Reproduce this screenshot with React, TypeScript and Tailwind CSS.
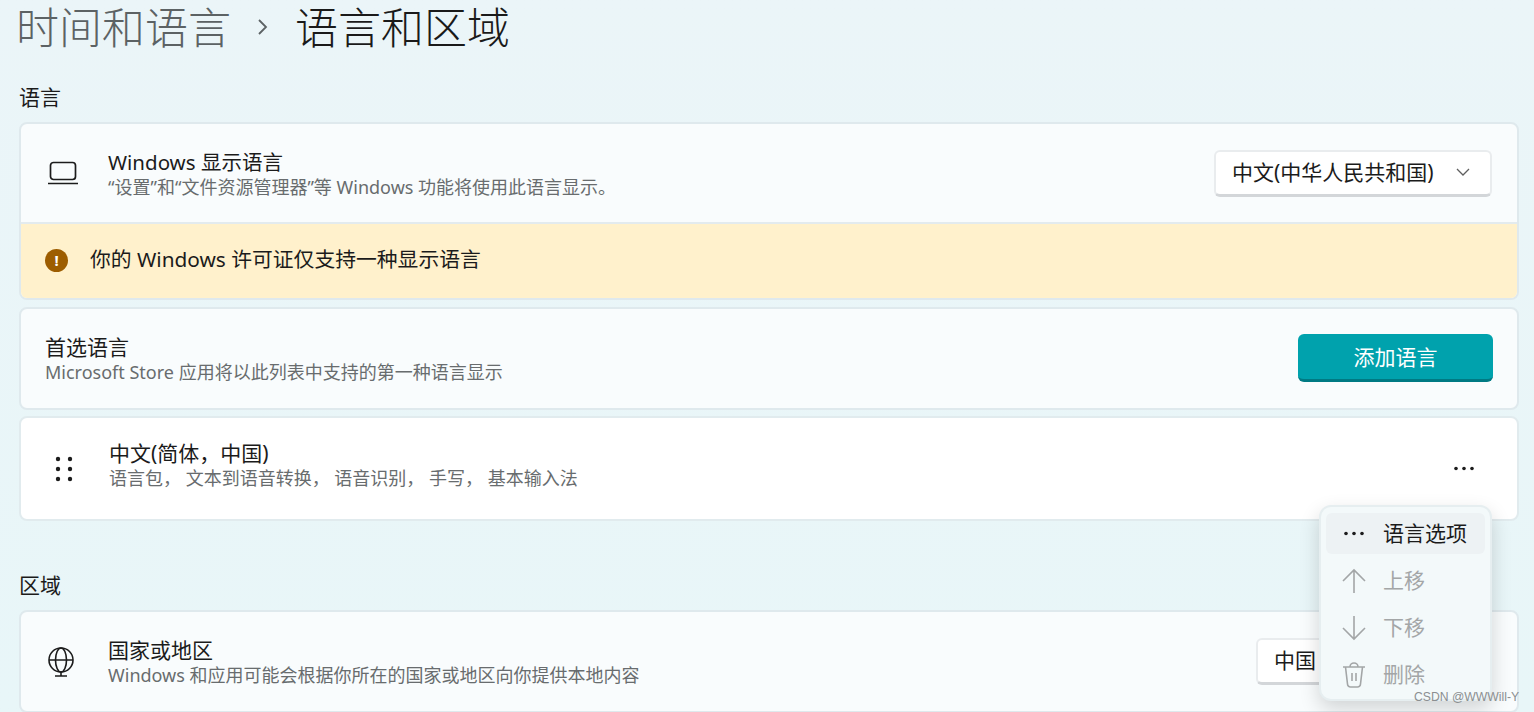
const font = { fontFamily: '"Noto Sans", "Noto Sans CJK SC", sans-serif' };

function Laptop() {
  return (
    <svg width="30" height="24" viewBox="0 0 30 24" fill="none" stroke="#1c1c1c" strokeWidth="1.7">
      <rect x="2.5" y="1.5" width="25" height="17" rx="3" />
      <path d="M0 22.5h30" />
    </svg>
  );
}

function Globe() {
  return (
    <svg width="28" height="30" viewBox="0 0 28 30" fill="none" stroke="#1c1c1c" strokeWidth="1.6">
      <circle cx="14" cy="13" r="12" />
      <ellipse cx="14" cy="13" rx="5.5" ry="12" />
      <path d="M2 13h24M14 25v4M8 29h12" />
    </svg>
  );
}

function Dots({ className }: { className?: string }) {
  return (
    <svg className={className} width="20" height="5" viewBox="0 0 20 5" fill="#1c1c1c">
      <circle cx="2" cy="2.5" r="1.8" />
      <circle cx="10" cy="2.5" r="1.8" />
      <circle cx="18" cy="2.5" r="1.8" />
    </svg>
  );
}

function Grip() {
  return (
    <svg width="18" height="26" viewBox="0 0 18 26" fill="#1c1c1c">
      {[3, 13, 23].map((y) => (
        <g key={y}>
          <circle cx="3" cy={y} r="2.2" />
          <circle cx="15" cy={y} r="2.2" />
        </g>
      ))}
    </svg>
  );
}

function Chevron() {
  return (
    <svg width="14" height="9" viewBox="0 0 14 9" fill="none" stroke="#5f5f5f" strokeWidth="1.3">
      <path d="M1 1l6 6 6-6" />
    </svg>
  );
}

function MenuRow({ icon, label, active }: { icon: React.ReactNode; label: string; active?: boolean }) {
  return (
    <div className={active ? "mb-[3px] flex h-[41px] items-center rounded-md bg-[#edf2f4] text-[#1b1b1b]" : "flex h-[47px] items-center text-[#a3a6a7]"}>
      <div className="flex w-[56px] shrink-0 justify-center">{icon}</div>
      <span className="ml-[1px] text-[21px] leading-none">{label}</span>
    </div>
  );
}

function Title({ title, sub, narrow, className }: { title: string; sub: string; narrow?: boolean; className?: string }) {
  return (
    <div className={className ? "flex flex-col " + className : "flex flex-col"}>
      <span className={narrow ? "text-[20.5px] leading-[26px] text-[#1b1b1b]" : "text-[21px] leading-[26px] text-[#1b1b1b]"}>{title}</span>
      <span className="text-[18px] leading-[24px] text-[#686c6e]">{sub}</span>
    </div>
  );
}

export default function App() {
  return (
    <div
      style={font}
      className="relative h-[712px] w-full overflow-hidden bg-gradient-to-b from-[#ebf5f8] to-[#e8f6f8] pl-[19px] pr-[15px]"
    >
      <div className="-ml-[3px] flex h-[54px] items-center text-[43px] leading-none font-light">
        <span className="text-[#5c6264]">时间和语言</span>
        <svg className="mx-[25px]" width="14" height="20" viewBox="0 0 14 20" fill="none" stroke="#5c6264" strokeWidth="1.8">
          <path d="M3 3l7 7-7 7" />
        </svg>
        <span className="text-[#1a1a1a]">语言和区域</span>
      </div>

      <div className="mt-[28px] text-[21px] leading-[30px] text-[#1b1b1b]">语言</div>

      <div className="mt-[10px] overflow-hidden rounded-lg border-2 border-[#dfe9ed] bg-[#f9fcfd]">
        <div className="flex h-[98px] items-center pr-[25px] pl-[27px]">
          <div className="w-[60px]">
            <Laptop />
          </div>
          <Title narrow className="mt-[1px]" title="Windows 显示语言" sub="“设置”和“文件资源管理器”等 Windows 功能将使用此语言显示。" />
          <div className="ml-auto flex h-[47px] w-[278px] items-center justify-between rounded-md border-2 border-b-[3px] border-[#e9ecee] border-b-[#d3d6d9] bg-white pr-[20px] pl-[16px] text-[21px] text-[#1b1b1b]">
            <span>中文(中华人民共和国)</span>
            <Chevron />
          </div>
        </div>
        <div className="flex h-[76px] items-center border-t-2 border-[#e3ebee] bg-[#fff1cc] pb-[2px] pl-[24px]">
          <span className="flex h-[23px] w-[23px] items-center justify-center rounded-full bg-[#9d5d00] text-[15px] leading-none font-bold text-white">!</span>
          <span className="ml-[22px] text-[20.8px] text-[#1b1b1b]">你的 Windows 许可证仅支持一种显示语言</span>
        </div>
      </div>

      <div className="mt-[7px] flex h-[103px] items-center rounded-lg border-2 border-[#dfe9ed] bg-[#f9fcfd] pr-[24px] pl-[24px]">
        <Title title="首选语言" sub="Microsoft Store 应用将以此列表中支持的第一种语言显示" />
        <div className="mb-[2px] ml-auto flex h-[48px] w-[195px] items-center justify-center rounded-md border-b-[3px] border-[#007a83] bg-[#00a2ad] pt-[3px] text-[21px] text-white">
          添加语言
        </div>
      </div>

      <div className="mt-[6px] flex h-[105px] items-center rounded-lg border-2 border-[#e1ebee] bg-white pr-[43px] pl-[34px]">
        <div className="w-[54px]">
          <Grip />
        </div>
        <Title className="mb-[7px]" title="中文(简体，中国)" sub="语言包， 文本到语音转换， 语音识别， 手写， 基本输入法" />
        <Dots className="ml-auto" />
      </div>

      <div className="mt-[49px] text-[21px] leading-[30px] text-[#1b1b1b]">区域</div>

      <div className="mt-[10px] flex h-[103px] items-center rounded-lg border-2 border-[#dfe9ed] bg-[#f9fcfd] pr-[25px] pl-[26px]">
        <div className="w-[61px]">
          <Globe />
        </div>
        <Title title="国家或地区" sub="Windows 和应用可能会根据你所在的国家或地区向你提供本地内容" />
        <div className="ml-auto flex h-[47px] w-[236px] items-center rounded-md border-2 border-b-[3px] border-[#e9ecee] border-b-[#d3d6d9] bg-white pl-[16px] text-[21px] text-[#1b1b1b]">
          中国
        </div>
      </div>

      <div className="absolute top-[505px] left-[1319px] flex h-[196px] w-[173px] flex-col rounded-xl border-2 border-[#e6eef0] bg-[#f3f9fa] px-[5px] pt-[6px] shadow-[0_8px_20px_rgba(0,0,0,0.16)]">
        <MenuRow active label="语言选项" icon={<Dots />} />
        <MenuRow
          label="上移"
          icon={
            <svg width="26" height="26" viewBox="0 0 26 26" fill="none" stroke="#a3a6a7" strokeWidth="1.6">
              <path d="M13 25V2M2 13L13 2l11 11" />
            </svg>
          }
        />
        <MenuRow
          label="下移"
          icon={
            <svg width="26" height="26" viewBox="0 0 26 26" fill="none" stroke="#a3a6a7" strokeWidth="1.6">
              <path d="M13 1v23M2 13l11 11 11-11" />
            </svg>
          }
        />
        <MenuRow
          label="删除"
          icon={
            <svg width="24" height="26" viewBox="0 0 24 26" fill="none" stroke="#a3a6a7" strokeWidth="1.6">
              <path d="M1 5h22M8 5a4 4 0 0 1 8 0M3.5 5l2 17a3 3 0 0 0 3 3h7a3 3 0 0 0 3-3l2-17M10 11v8M14 11v8" />
            </svg>
          }
        />
      </div>

      <div className="absolute top-[689px] left-[1414px] text-[12.2px] leading-4 text-[#8b8f91]" style={{ fontFamily: '"Liberation Sans", sans-serif' }}>
        CSDN @WWWill-Y
      </div>
    </div>
  );
}
